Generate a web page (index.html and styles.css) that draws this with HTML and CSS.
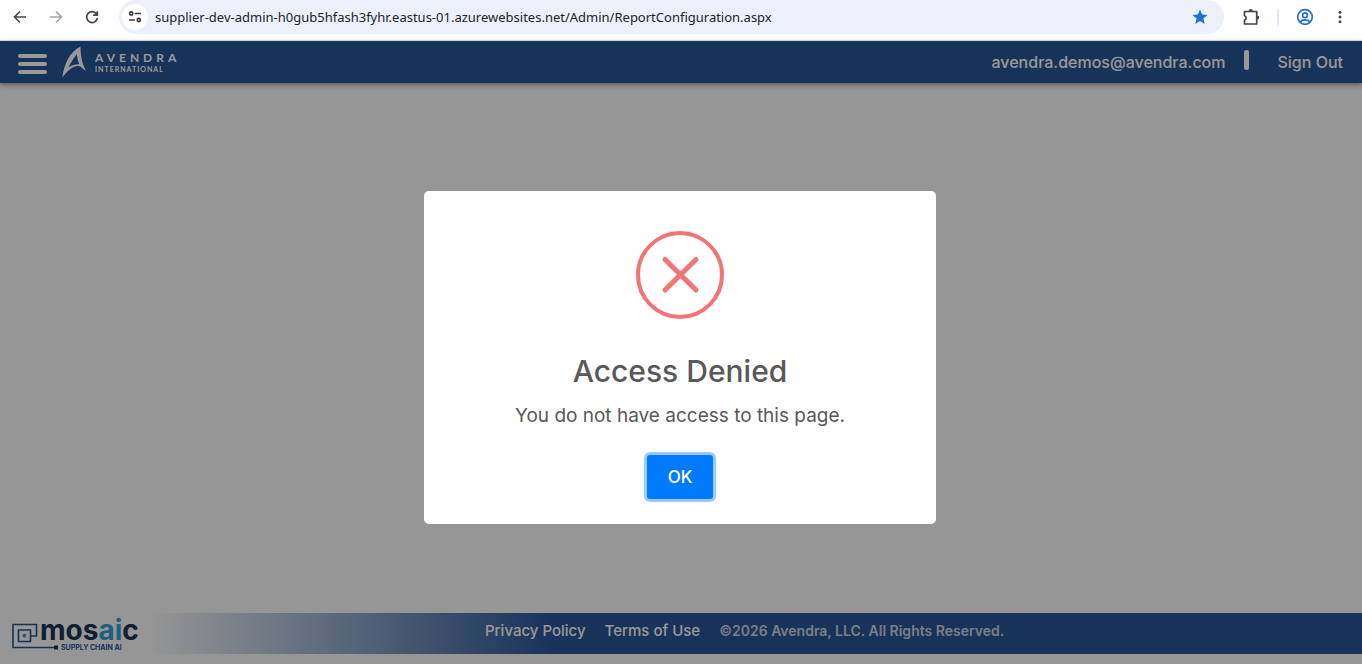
FILE: index.html
```
<!DOCTYPE html>
<html lang="en">
<head>
<meta charset="utf-8">
<title>Report Configuration</title>
<link rel="stylesheet" href="styles.css">
</head>
<body>
<div class="toolbar">
  <button class="tool" aria-label="Back"><svg width="16" height="16" viewBox="0 0 16 16"><path d="M14 8H3M8 2.5 2.5 8 8 13.500" fill="none" stroke="#474449" stroke-width="1.600"/></svg></button>
  <button class="tool" aria-label="Forward"><svg width="16" height="16" viewBox="0 0 16 16"><path d="M2 8h11M8 2.500 13.500 8 8 13.500" fill="none" stroke="#a6a5a8" stroke-width="1.600"/></svg></button>
  <button class="tool" aria-label="Reload"><svg width="16" height="16" viewBox="0 0 16 16"><path d="M12.700 5.300A5.400 5.400 0 1 0 13.400 9M13.300 2.200v4H9.200" fill="none" stroke="#474449" stroke-width="1.700"/></svg></button>
  <div class="address">
    <button class="site-info" aria-label="Site information"><svg width="14" height="14" viewBox="0 0 14 14" fill="none" stroke="#33363b" stroke-width="1.600"><circle cx="3.200" cy="3.500" r="1.600"/><path d="M6.800 3.500H13M1 10h6"/><circle cx="10.800" cy="10" r="1.600"/></svg></button>
    <input class="url" aria-label="Address" value="supplier-dev-admin-h0gub5hfash3fyhr.eastus-01.azurewebsites.net/Admin/ReportConfiguration.aspx">
    <button class="tool" aria-label="Bookmark"><svg width="16" height="16" viewBox="0 0 16 16"><path d="m8 .5 2.100 5 5.400.5-4.100 3.500 1.300 5.500L8 12.100 3.300 15l1.300-5.500L.5 6l5.400-.5z" fill="#236fd3"/></svg></button>
  </div>
  <button class="tool" aria-label="Extensions"><svg width="18" height="18" viewBox="0 0 18 18"><path d="M2.500 3.500h12.200V16H2.500v-3.900a2.300 2.300 0 0 0 0-4.400z" fill="none" stroke="#474449" stroke-width="1.700" stroke-linejoin="round"/><path d="M6.700 3a2 2 0 0 1 4 0zM15.200 7.500a2 2 0 0 1 0 4z" fill="#474449"/></svg></button>
  <span class="tool-divider"></span>
  <button class="tool" aria-label="Profile"><svg width="18" height="18" viewBox="0 0 18 18" fill="none" stroke="#236fd3" stroke-width="1.700"><circle cx="9" cy="9" r="7.300"/><circle cx="9" cy="7.200" r="2.400"/><path d="M4 14c2.600-2.900 7.400-2.900 10 0"/></svg></button>
  <button class="tool" aria-label="Browser menu"><svg width="16" height="16" viewBox="0 0 16 16" fill="#474449"><circle cx="8" cy="3.200" r="1.500"/><circle cx="8" cy="8" r="1.500"/><circle cx="8" cy="12.800" r="1.500"/></svg></button>
</div>
<div class="page">
  <header class="header">
    <button class="menu" aria-label="Menu"><span></span><span></span><span></span></button>
    <a class="brand" href="#">
      <svg width="24" height="32" viewBox="0 0 24 32"><path d="M18.500.5C18.500 9 20 18 24 24.500 21.500 23.500 20 22 18.500 20.500 13 18.500 7.500 22.500.2 31.500 2.500 17 8 5.500 18.500.5zM14.800 8.200C11.500 12 8.500 17 6.500 21.500c3.500-2.500 7-3.500 10.700-3.300-1.200-3-2-6.500-2.400-10z" fill="#fff" fill-rule="evenodd"/></svg>
      <span class="brand-text"><span class="brand-name">AVENDRA</span><span class="brand-sub">INTERNATIONAL</span></span>
    </a>
    <nav class="account">
      <a href="#">avendra.demos@avendra.com</a>
      <span class="bar"></span>
      <a href="#">Sign Out</a>
    </nav>
  </header>
  <main class="content"></main>
  <footer class="footer">
    <a class="mosaic" href="#" aria-label="mosaic supply chain AI">
      <svg width="140" height="38" viewBox="0 0 140 38">
        <g fill="none" stroke="#245489" stroke-width="1.600"><path d="M42 32.500H1V9.500h23.500V21h-6"/><path d="M18.500 21v5.500h-12V15h12v6"/></g>
        <path d="M10.800 19h3.400v3.400h-3.400z" fill="#35a0d0"/><path d="M42 30.500h4v4h-4z" fill="#193454"/>
        <text class="mosaic-name" x="28" y="25">mos<tspan class="mosaic-accent">ai</tspan>c</text>
        <text class="mosaic-sub" x="49" y="35">SUPPLY CHAIN AI</text>
      </svg>
    </a>
    <div class="legal"><a href="#">Privacy Policy</a><a href="#">Terms of Use</a><span class="copyright">©2026 Avendra, LLC. All Rights Reserved.</span></div>
  </footer>
  <div class="overlay">
    <div class="modal" role="dialog" aria-modal="true" aria-labelledby="dialog-title">
      <svg class="error-icon" width="88" height="88" viewBox="0 0 88 88" fill="none" stroke="#f27474"><circle cx="44" cy="44" r="42" stroke-width="4"/><path d="m29 28.500 31 30.500M60 28.500 29 59" stroke-width="5" stroke-linecap="round"/></svg>
      <h1 class="modal-title" id="dialog-title">Access Denied</h1>
      <p class="modal-text">You do not have access to this page.</p>
      <button class="ok">OK</button>
    </div>
  </div>
</div>
</body>
</html>
```
FILE: styles.css
```
* { box-sizing: border-box; }
body {
  margin: 0;
  min-height: 100vh;
  display: flex;
  flex-direction: column;
  font-family: Inter, "Liberation Sans", sans-serif;
}
button { border: 0; padding: 0; background: none; font: inherit; }
a { color: inherit; text-decoration: none; }
svg { display: block; }

.toolbar {
  display: flex;
  align-items: center;
  height: 41px;
  padding: 0 12px 6px 11px;
  border-bottom: 1px solid #e2e2e2;
  background: #fff;
}
.tool { display: grid; place-items: center; width: 18px; height: 18px; flex: none; }
.toolbar > .tool { margin-right: 18px; }
.toolbar > .tool:last-child { width: 16px; margin: 0 2px 0 0; }
.address {
  flex: 1;
  display: flex;
  align-items: center;
  height: 34px;
  margin-right: 18px;
  padding: 0 15px 0 3px;
  border-radius: 17px;
  background: #ebf0fa;
}
.site-info { display: grid; place-items: center; width: 26px; height: 26px; border-radius: 50%; background: #fff; }
.url {
  flex: 1;
  margin-left: 7px;
  padding: 0;
  border: 0;
  outline: 0;
  background: none;
  color: #1f2328;
  font: 13px/18px "Noto Sans", sans-serif;
}
.tool-divider { width: 2px; height: 16px; margin: 0 17px 0 -1px; background: #d3ebfb; }

.page { position: relative; flex: 1; display: flex; flex-direction: column; padding-bottom: 10px; background: #fafafa; }
.header {
  display: flex;
  align-items: center;
  height: 42px;
  padding: 0 19px 0 18px;
  background: #265596;
  color: #fff;
  box-shadow: 0 2px 5px rgba(0, 0, 0, .4);
}
.menu { display: grid; gap: 4px; width: 29px; margin: 3px 15px 0 0; }
.menu span { height: 4px; border-radius: 2px; background: #fff; }
.brand { display: flex; align-items: center; gap: 9px; }
.brand-text { display: grid; gap: 1px; font-family: Lato, sans-serif; font-weight: 700; }
.brand-name { font-size: 12px; line-height: 13px; letter-spacing: 4px; }
.brand-sub { font-size: 7px; line-height: 8px; letter-spacing: 1px; }
.account { display: flex; align-items: center; margin-left: auto; font-size: 16px; font-weight: 500; }
.bar { width: 5px; height: 20px; margin: 0 28px 4px 19px; border-radius: 2px; background: #fff; }
.content { flex: 1; }
.footer {
  display: grid;
  grid-template-columns: 485px 1fr;
  align-items: center;
  height: 41px;
  background: linear-gradient(90deg, rgba(38, 85, 150, 0) 150px, #265596 555px);
  color: #fff;
  font-size: 15px;
}
.mosaic { padding-left: 12px; }
.mosaic-name { font: 700 28px Inter, sans-serif; fill: #193454; }
.mosaic-accent { fill: #35a0d0; }
.mosaic-sub { font: 700 7px Inter, sans-serif; fill: #265596; }
.legal { display: flex; align-items: center; gap: 19px; padding-bottom: 7px; font-weight: 500; white-space: nowrap; }
.copyright { color: #ccd3e2; font-size: 14px; font-weight: 600; }

.overlay {
  position: absolute;
  inset: 0;
  display: grid;
  place-items: center;
  padding: 10px 2px 0 0;
  background: rgba(0, 0, 0, .4);
}
.modal {
  display: flex;
  flex-direction: column;
  align-items: center;
  width: 512px;
  max-width: 100%;
  padding: 40px 20px 25px;
  border-radius: 5px;
  background: #fff;
  color: #595959;
}
.modal-title { margin: 32px 0 0; font-size: 30px; line-height: 40px; font-weight: 500; }
.modal-text { margin: 12px 0 0; font-size: 19px; line-height: 26px; }
.ok {
  width: 66px;
  height: 44px;
  margin-top: 26px;
  border-radius: 3px;
  background: #007bff;
  box-shadow: 0 0 0 3px #99caff;
  color: #fff;
  font-size: 17px;
  font-weight: 500;
}
```
